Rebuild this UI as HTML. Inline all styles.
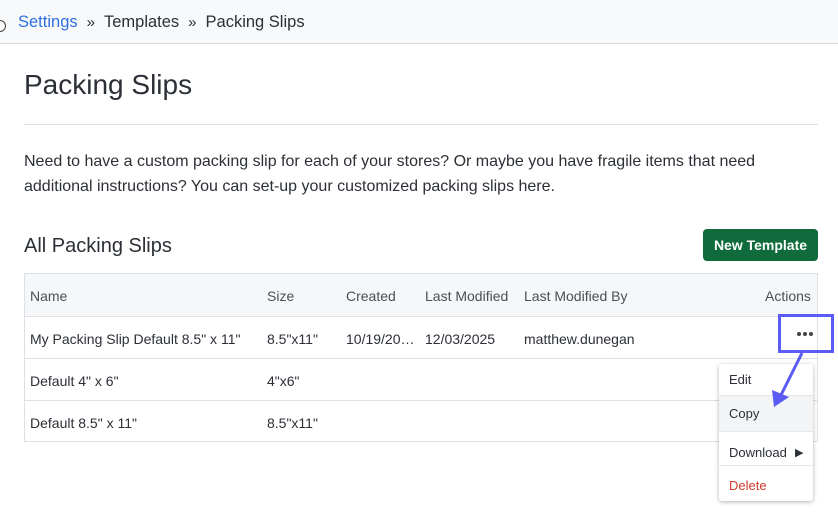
<!DOCTYPE html>
<html><head><meta charset="utf-8"><style>
*{margin:0;padding:0;box-sizing:border-box}
body{width:838px;height:514px;background:#fff;font-family:"Liberation Sans",sans-serif;color:#2b2f36;position:relative;overflow:hidden}
.top{position:absolute;left:0;top:0;width:838px;height:44px;background:#f8f9fb;border-bottom:1px solid #d5d9de}
.bc{position:absolute;top:13px;left:18px;font-size:16.5px;color:#2b2f36;white-space:nowrap}
.bc a{color:#2f6fe0;text-decoration:none}
.bc .s{margin:0 9px;font-size:15px}
.circ{position:absolute;left:-6px;top:20px;width:12px;height:12px;border:1px solid #444;border-radius:50%}
h1{position:absolute;left:24px;top:69px;font-size:28px;font-weight:normal;color:#2b2f36}
.hr{position:absolute;left:24px;top:124px;width:794px;height:1px;background:#dde0e4}
.p{position:absolute;left:24px;top:149px;font-size:16px;line-height:25px;width:800px}
h2{position:absolute;left:24px;top:235px;font-size:20px;font-weight:normal}
.btn{position:absolute;left:703px;top:229px;width:115px;height:32px;background:#0f6b3c;color:#fff;border-radius:4px;font-size:14px;font-weight:bold;text-align:center;line-height:32px}
.tbl{position:absolute;left:24px;top:273px;width:794px;height:169px;border:1px solid #dde0e4}
.row{position:absolute;left:0;width:792px;border-bottom:1px solid #dde0e4;font-size:14px}
.row span{position:absolute;top:14px;white-space:nowrap}
.hd{background:#f6f7f9;color:#4a4f57}
.box{position:absolute;left:778px;top:314px;width:56px;height:39px;border:3px solid #5b5bf5}
.dots{position:absolute;left:797px;top:332px;line-height:0;height:4px}
.dots i{display:inline-block;width:4px;height:4px;border-radius:50%;background:#444;margin-right:2px;vertical-align:top}
.menu{position:absolute;left:719px;top:364px;width:94px;height:137px;background:#fff;box-shadow:0 1px 4px rgba(0,0,0,.3);border-radius:3px;font-size:13px}
.menu div{position:absolute;left:0;width:94px;padding-left:10px}
</style></head><body>
<div class="top"><div class="circ"></div><div class="bc"><a>Settings</a><span class="s">»</span>Templates<span class="s">»</span>Packing Slips</div></div>
<h1>Packing Slips</h1>
<div class="hr"></div>
<div class="p">Need to have a custom packing slip for each of your stores? Or maybe you have fragile items that need additional instructions? You can set-up your customized packing slips here.</div>
<h2>All Packing Slips</h2>
<div class="btn">New Template</div>
<div class="tbl">
<div class="row hd" style="top:0;height:43px"><span style="left:5px">Name</span><span style="left:242px">Size</span><span style="left:321px">Created</span><span style="left:400px">Last Modified</span><span style="left:499px">Last Modified By</span><span style="left:740px">Actions</span></div>
<div class="row" style="top:43px;height:42px"><span style="left:5px">My Packing Slip Default 8.5" x 11"</span><span style="left:242px">8.5"x11"</span><span style="left:321px">10/19/20…</span><span style="left:400px">12/03/2025</span><span style="left:499px">matthew.dunegan</span></div>
<div class="row" style="top:85px;height:42px"><span style="left:5px">Default 4" x 6"</span><span style="left:242px">4"x6"</span></div>
<div class="row" style="top:127px;height:41px;border-bottom:none"><span style="left:5px">Default 8.5" x 11"</span><span style="left:242px">8.5"x11"</span></div>
</div>
<div class="dots"><i></i><i></i><i></i></div>
<div class="box"></div>
<div class="menu">
<div style="top:0;height:32px;line-height:32px;border-bottom:1px solid #e6e8eb">Edit</div>
<div style="top:32px;height:36px;line-height:36px;background:#f3f4f6;border-bottom:1px solid #e6e8eb">Copy</div>
<div style="top:68px;height:34px;line-height:42px;border-bottom:1px solid #e6e8eb">Download <span style="position:absolute;left:76px;font-size:11px">▶</span></div>
<div style="top:102px;height:35px;line-height:40px;color:#d33a2c">Delete</div>
</div>
<svg style="position:absolute;left:0;top:0" width="838" height="514"><line x1="802" y1="353" x2="781" y2="395" stroke="#5b5bf5" stroke-width="3"/><polygon points="774,407 772,390 789,397" fill="#5b5bf5"/></svg>
</body></html>
